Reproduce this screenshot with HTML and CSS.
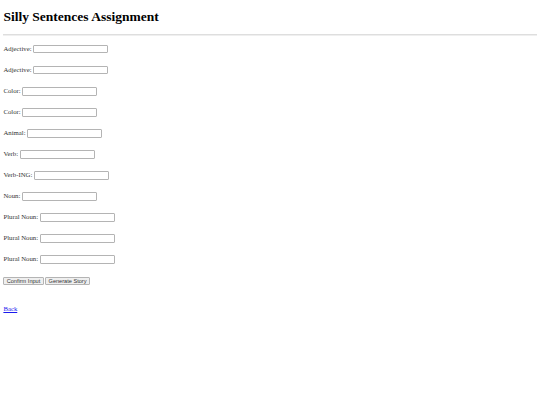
FILE: index.html
```html
<!DOCTYPE html>
<html lang="en">
<head>
<meta charset="utf-8">
<title>Silly Sentences Assignment</title>
<link rel="stylesheet" href="styles.css">
</head>
<body>
<h1 class="title">Silly Sentences Assignment</h1>
<hr class="rule">
<form class="story-form">
  <div class="row"><label class="label">Adjective:</label> <input class="field" type="text"></div>
  <div class="row"><label class="label">Adjective:</label> <input class="field" type="text"></div>
  <div class="row"><label class="label">Color:</label> <input class="field" type="text"></div>
  <div class="row"><label class="label">Color:</label> <input class="field" type="text"></div>
  <div class="row"><label class="label">Animal:</label> <input class="field" type="text"></div>
  <div class="row"><label class="label">Verb:</label> <input class="field" type="text"></div>
  <div class="row"><label class="label">Verb-ING:</label> <input class="field" type="text"></div>
  <div class="row"><label class="label">Noun:</label> <input class="field" type="text"></div>
  <div class="row"><label class="label">Plural Noun:</label> <input class="field" type="text"></div>
  <div class="row"><label class="label">Plural Noun:</label> <input class="field" type="text"></div>
  <div class="row"><label class="label">Plural Noun:</label> <input class="field" type="text"></div>
  <div class="row"><button class="btn" type="button">Confirm Input</button> <button class="btn" type="button">Generate Story</button></div>
</form>
<p class="back"><a class="back-link" href="#">Back</a></p>
</body>
</html>
```
FILE: styles.css
```css
html {
  background: #ffffff;
}
body {
  margin: 0 3.4px;
  font-family: "Liberation Serif", "Times New Roman", serif;
  font-size: 6.75px;
  color: #000000;
}
.title {
  font-size: 13.5px;
  line-height: 15.5px;
  font-weight: bold;
  margin: 9px 0 9px;
}
.rule {
  margin: 0 0 2px;
  border: 0;
  border-top: 1px solid #dedede;
  border-bottom: 1px solid #efefef;
  height: 0;
}
.story-form {
  margin: 0;
}
.row {
  height: 21.1px;
  line-height: 21.1px;
  white-space: nowrap;
}
.label {
  color: #333333;
}
.field {
  box-sizing: border-box;
  width: 75px;
  height: 8.8px;
  padding: 0 1px;
  margin: 0;
  border: 1px solid #b4b4b4;
  border-radius: 1px;
  font-family: "Liberation Sans", Arial, sans-serif;
  font-size: 5.6px;
  line-height: normal;
  vertical-align: middle;
}
.btn {
  box-sizing: border-box;
  height: 8.8px;
  margin: 0;
  font-family: "Liberation Sans", Arial, sans-serif;
  font-size: 5.6px;
  padding: 0 2.3px;
  border: 1px solid #b4b4b4;
  border-radius: 1px;
  background: #efefef;
  color: #333333;
  line-height: 6px;
  vertical-align: middle;
}
.back {
  margin: 14.6px 0 0;
  line-height: 7.8px;
}
.back-link {
  color: #1a1aee;
  text-decoration: underline;
}
```
